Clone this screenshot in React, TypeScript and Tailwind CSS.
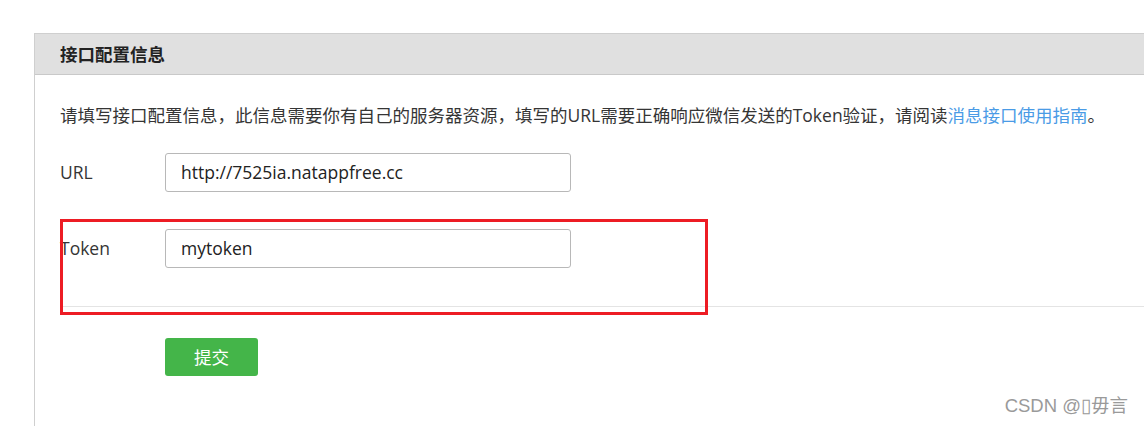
const font = { fontFamily: '"Open Sans", "Noto Sans CJK SC", sans-serif' };

function FieldRow({ label, value }: { label: string; value: string }) {
  return (
    <div className="flex items-center">
      <label className="w-[105px] shrink-0 text-[17.5px] text-[#353535]">{label}</label>
      <div className="flex h-[39px] w-[406px] items-center rounded-[3px] border border-[#b8b8b8] bg-white pl-[15px] text-[17.5px] text-[#222]">
        {value}
      </div>
    </div>
  );
}

export default function App() {
  return (
    <div className="relative h-[426px] w-full overflow-hidden bg-white pl-[34px] pt-[33px]" style={font}>
      <div className="h-full border-l border-t border-[#cfcfcf]">
        <div className="flex h-[41px] items-center border-b border-[#c9c9c9] bg-[#e0e0e0] pl-[25px]">
          <h2 className="text-[17.5px] font-bold text-[#222]">接口配置信息</h2>
        </div>

        <div className="pl-[25px] pt-[27px]">
          <p className="text-[17.5px] leading-[26px] text-[#353535] whitespace-nowrap">
            请填写接口配置信息，此信息需要你有自己的服务器资源，填写的URL需要正确响应微信发送的Token验证，请阅读
            <a className="text-[#4a9be6]">消息接口使用指南</a>。
          </p>

          <div className="mt-[25px] flex flex-col gap-[37px]">
            <FieldRow label="URL" value="http://7525ia.natappfree.cc" />
            <FieldRow label="Token" value="mytoken" />
          </div>

          <div className="mt-[38px] border-t border-[#e4e4e4]" />

          <div className="pl-[105px] pt-[31px]">
            <button className="h-[38px] w-[93px] rounded-[3px] bg-[#44b549] text-[17.5px] text-white">
              提交
            </button>
          </div>
        </div>
      </div>

      {/* annotation box drawn over the token row */}
      <div className="pointer-events-none absolute left-[60px] top-[219px] h-[96px] w-[648px] border-[3px] border-[#ed1c24]" />

      <div
        className="absolute bottom-[6px] right-[16px] text-[18.5px] text-[#9a9a9a]"
        style={{ fontFamily: '"Liberation Sans", "Noto Sans CJK SC", sans-serif' }}
      >
        CSDN @▯毋言
      </div>
    </div>
  );
}
